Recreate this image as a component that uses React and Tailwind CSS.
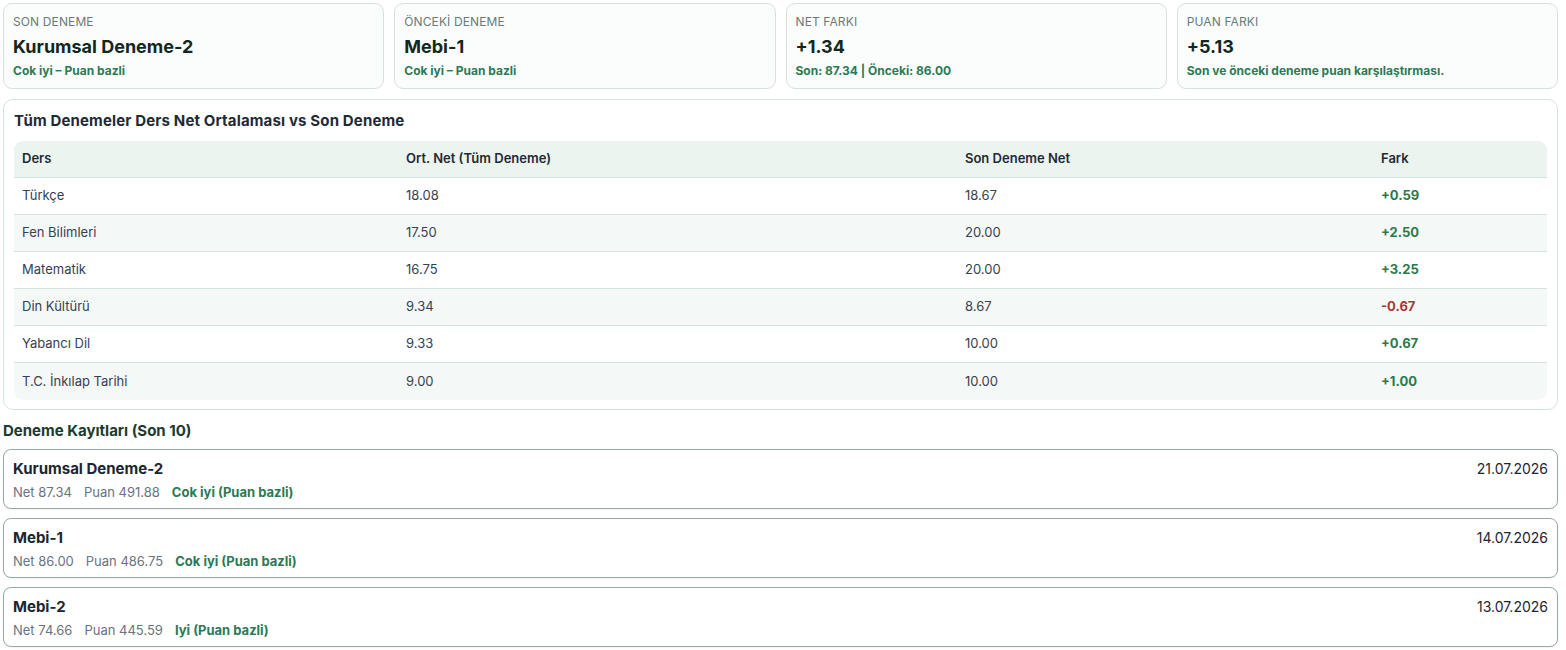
import React from 'react'

const summary = [
  { label: 'SON DENEME', value: 'Kurumsal Deneme-2', sub: 'Cok iyi – Puan bazli' },
  { label: 'ÖNCEKİ DENEME', value: 'Mebi-1', sub: 'Cok iyi – Puan bazli' },
  { label: 'NET FARKI', value: '+1.34', sub: 'Son: 87.34 | Önceki: 86.00' },
  { label: 'PUAN FARKI', value: '+5.13', sub: 'Son ve önceki deneme puan karşılaştırması.' }
]

const rows = [
  { ders: 'Türkçe', ort: '18.08', son: '18.67', fark: '+0.59' },
  { ders: 'Fen Bilimleri', ort: '17.50', son: '20.00', fark: '+2.50' },
  { ders: 'Matematik', ort: '16.75', son: '20.00', fark: '+3.25' },
  { ders: 'Din Kültürü', ort: '9.34', son: '8.67', fark: '-0.67' },
  { ders: 'Yabancı Dil', ort: '9.33', son: '10.00', fark: '+0.67' },
  { ders: 'T.C. İnkılap Tarihi', ort: '9.00', son: '10.00', fark: '+1.00' }
]

const records = [
  { name: 'Kurumsal Deneme-2', net: '87.34', puan: '491.88', seviye: 'Cok iyi (Puan bazli)', date: '21.07.2026' },
  { name: 'Mebi-1', net: '86.00', puan: '486.75', seviye: 'Cok iyi (Puan bazli)', date: '14.07.2026' },
  { name: 'Mebi-2', net: '74.66', puan: '445.59', seviye: 'Iyi (Puan bazli)', date: '13.07.2026' }
]

const cols = 'grid grid-cols-[384px_559px_416px_1fr]'

export default function App() {
  return (
    <div className="min-h-screen bg-white pl-[3px] pr-[8px] pt-[3px] text-[#1f2a37]" style={{ fontFamily: 'Inter, "Noto Sans", sans-serif' }}>
      {/* özet kartları */}
      <div className="grid grid-cols-4 gap-[10px]">
        {summary.map((s) => (
          <div key={s.label} className="h-[86px] rounded-[9px] border border-[#d5e3de] bg-[#fbfdfc] px-[9px] pt-[10px]">
            <div className="text-[12px] leading-[16px] tracking-[0.01em] text-[#6b7a76]">{s.label}</div>
            <div className="mt-[5px] text-[18px] font-bold leading-[24px] text-[#12281f]">{s.value}</div>
            <div className="mt-[4px] text-[12px] font-bold leading-[16px] text-[#2b7a55]">{s.sub}</div>
          </div>
        ))}
      </div>

      {/* ders tablosu */}
      <div className="mt-[10px] rounded-[10px] border border-[#d5e3de] bg-white px-[10px] pb-[9px] pt-[11px]">
        <h2 className="text-[15px] font-bold leading-[20px] tracking-[0.01em] text-[#1f2a37]">Tüm Denemeler Ders Net Ortalaması vs Son Deneme</h2>
        <div className="mt-[10px] overflow-hidden rounded-[9px]">
          <div className={`${cols} h-[37px] items-center border-b border-[#d5e3de] bg-[#ebf4ef] text-[13px] font-semibold text-[#1f2a37]`}>
            <div className="px-[8px]">Ders</div>
            <div className="px-[8px]">Ort. Net (Tüm Deneme)</div>
            <div className="px-[8px]">Son Deneme Net</div>
            <div className="px-[8px]">Fark</div>
          </div>
          {rows.map((r, i) => (
            <div
              key={r.ders}
              className={`${cols} h-[37px] items-center text-[13px] text-[#374151] ${i % 2 === 1 ? 'bg-[#f4f8f6]' : 'bg-white'} ${i < rows.length - 1 ? 'border-b border-[#d5e3de]' : ''}`}
            >
              <div className="px-[8px]">{r.ders}</div>
              <div className="px-[8px]">{r.ort}</div>
              <div className="px-[8px]">{r.son}</div>
              <div className={`px-[8px] font-bold ${r.fark.startsWith('-') ? 'text-[#a33a3a]' : 'text-[#2b7a4b]'}`}>{r.fark}</div>
            </div>
          ))}
        </div>
      </div>

      {/* kayıtlar */}
      <h2 className="mt-[11px] text-[15px] font-bold leading-[20px] text-[#1c3a2e]">Deneme Kayıtları (Son 10)</h2>
      <div className="mt-[8px] flex flex-col gap-[9px]">
        {records.map((r) => (
          <div key={r.name} className="flex h-[60px] justify-between rounded-[8px] border border-[#93aba2] bg-white px-[9px] pt-[9px] shadow-[0_1px_2px_rgba(0,0,0,0.05)]">
            <div>
              <div className="text-[15px] font-bold leading-[20px] text-[#1c2533]">{r.name}</div>
              <div className="mt-[5px] flex gap-[12px] text-[13px] leading-[16px] text-[#6b7280]">
                <span>Net {r.net}</span>
                <span>Puan {r.puan}</span>
                <span className="font-bold text-[#2b7a55]">{r.seviye}</span>
              </div>
            </div>
            <div className="text-[14px] leading-[20px] text-[#1c2533]">{r.date}</div>
          </div>
        ))}
      </div>
    </div>
  )
}
